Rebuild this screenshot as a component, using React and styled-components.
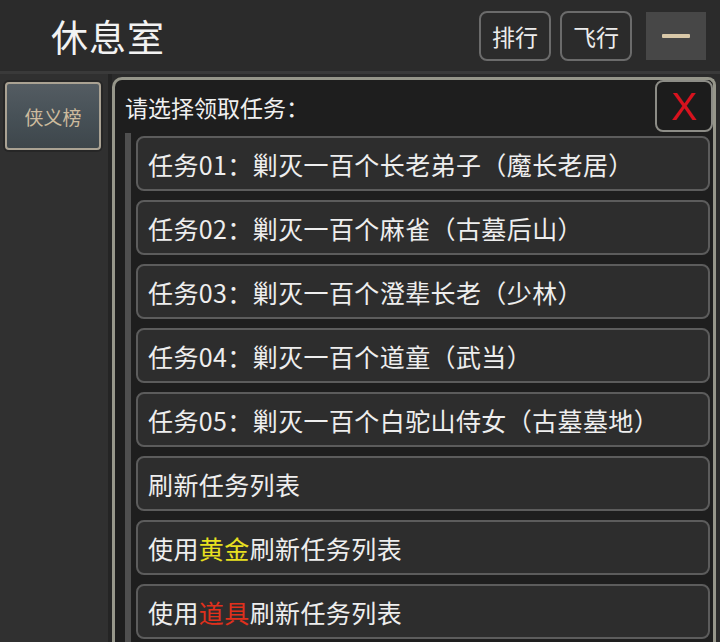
import React from 'react';
import styled, { createGlobalStyle } from 'styled-components';

const GlobalStyle = createGlobalStyle`
  html, body {
    margin: 0;
    padding: 0;
    background: #2b2b2b;
  }
  body {
    font-family: "Noto Sans CJK SC", "Noto Sans", sans-serif;
    overflow: hidden;
  }
`;

const Page = styled.div`
  width: 720px;
  height: 642px;
  display: flex;
  flex-direction: column;
  background: #2b2b2b;
  overflow: hidden;
`;

const TopBar = styled.header`
  height: 74px;
  flex-shrink: 0;
  display: flex;
  align-items: center;
  padding: 0 14px 0 51px;
  box-sizing: border-box;
  border-bottom: 3px solid #3a3a3a;
`;

const Title = styled.h1`
  margin: 0;
  flex: 1;
  font-size: 37px;
  font-weight: 400;
  color: #f2f2f2;
  letter-spacing: 1px;
`;

const TopButton = styled.button`
  width: 72px;
  height: 50px;
  margin-left: 9px;
  border: 2px solid #6b6b6b;
  border-radius: 8px;
  background: #2b2b2b;
  color: #ececec;
  font-family: inherit;
  font-size: 23px;
  padding: 0;
`;

const MinusButton = styled.button`
  width: 60px;
  height: 48px;
  margin-left: 14px;
  border: none;
  background: #474747;
  display: flex;
  align-items: center;
  justify-content: center;
  padding: 0;
`;

const MinusBar = styled.span`
  width: 28px;
  height: 4px;
  border-radius: 1px;
  background: #d9c8a8;
`;

const Body = styled.div`
  flex: 1;
  display: flex;
  min-height: 0;
`;

const Sidebar = styled.aside`
  width: 112px;
  flex-shrink: 0;
  background: #303030;
  border-right: 4px solid #242424;
  box-sizing: border-box;
  padding: 8px 0 0 5px;
`;

const SideTab = styled.div`
  width: 96px;
  height: 68px;
  box-sizing: border-box;
  border: 2px solid #aaa293;
  border-radius: 4px;
  background: linear-gradient(180deg, #545c62 0%, #465056 55%, #3e464b 100%);
  box-shadow: 0 0 0 2px #262626;
  display: flex;
  align-items: center;
  justify-content: center;
  color: #cdbb9e;
  font-size: 19px;
`;

const Panel = styled.section`
  flex: 1;
  margin: 3px 4px 0 0;
  border: 3px solid #96968a;
  border-bottom: none;
  border-radius: 10px 8px 0 0;
  background: #1e1e1e;
  display: flex;
  flex-direction: column;
  min-height: 0;
`;

const PanelHeader = styled.div`
  height: 53px;
  flex-shrink: 0;
  display: flex;
  align-items: flex-start;
  justify-content: space-between;
`;

const PanelTitle = styled.span`
  margin: 10px 0 0 10px;
  font-size: 23px;
  color: #f0f0f0;
`;

const CloseButton = styled.button`
  width: 58px;
  height: 52px;
  box-sizing: border-box;
  border: 2px solid #8c8c86;
  border-radius: 8px;
  background: #1c1c1c;
  color: #d8121e;
  font-family: "Liberation Sans", Arial, sans-serif;
  font-size: 39px;
  line-height: 1;
  padding: 0;
  display: flex;
  align-items: center;
  justify-content: center;
`;

const ListArea = styled.div`
  flex: 1;
  display: flex;
  min-height: 0;
  padding-left: 10px;
`;

const Track = styled.div`
  width: 6px;
  flex-shrink: 0;
  background: #4f4f4f;
`;

const TaskList = styled.div`
  flex: 1;
  display: flex;
  flex-direction: column;
  gap: 9px;
  padding: 3px 3px 0 5px;
`;

const TaskItem = styled.div`
  height: 55px;
  flex-shrink: 0;
  box-sizing: border-box;
  border: 2px solid #5c5c5c;
  border-radius: 8px;
  background: #2d2d2d;
  display: flex;
  align-items: center;
  padding-left: 10px;
  font-size: 25px;
  letter-spacing: 0.4px;
  color: #eeeeee;
  white-space: nowrap;
`;

const Accent = styled.span`
  color: ${(p) => (p.$tone === 'gold' ? '#e8e020' : '#e0301c')};
`;

const tasks = [
  '任务01：剿灭一百个长老弟子（魔长老居）',
  '任务02：剿灭一百个麻雀（古墓后山）',
  '任务03：剿灭一百个澄辈长老（少林）',
  '任务04：剿灭一百个道童（武当）',
  '任务05：剿灭一百个白驼山侍女（古墓墓地）',
];

export default function App() {
  return (
    <Page>
      <GlobalStyle />
      <TopBar>
        <Title>休息室</Title>
        <TopButton>排行</TopButton>
        <TopButton>飞行</TopButton>
        <MinusButton>
          <MinusBar />
        </MinusButton>
      </TopBar>
      <Body>
        <Sidebar>
          <SideTab>侠义榜</SideTab>
        </Sidebar>
        <Panel>
          <PanelHeader>
            <PanelTitle>请选择领取任务：</PanelTitle>
            <CloseButton>X</CloseButton>
          </PanelHeader>
          <ListArea>
            <Track />
            <TaskList>
              {tasks.map((t) => (
                <TaskItem key={t}>{t}</TaskItem>
              ))}
              <TaskItem>刷新任务列表</TaskItem>
              <TaskItem>
                使用<Accent $tone="gold">黄金</Accent>刷新任务列表
              </TaskItem>
              <TaskItem>
                使用<Accent $tone="red">道具</Accent>刷新任务列表
              </TaskItem>
            </TaskList>
          </ListArea>
        </Panel>
      </Body>
    </Page>
  );
}
